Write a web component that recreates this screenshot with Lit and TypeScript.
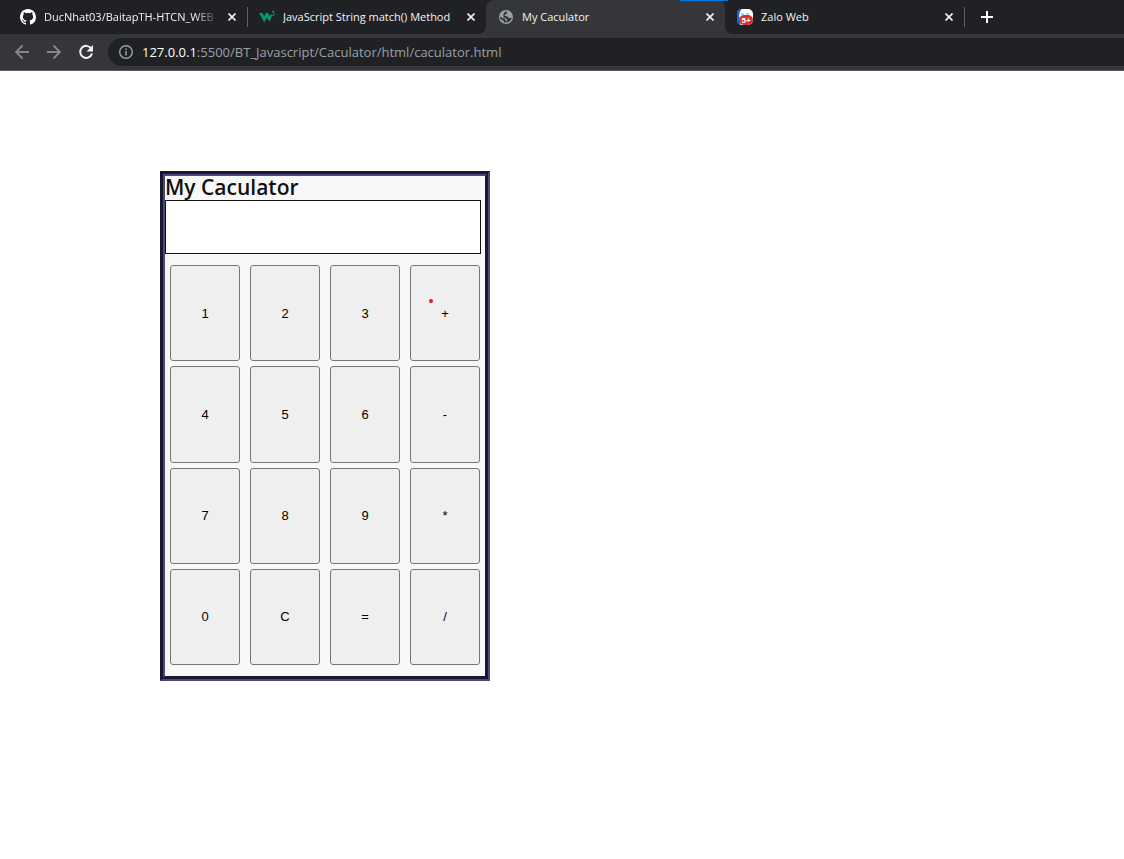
import { LitElement, html, css, svg, nothing } from "lit";
import { customElement, property, state } from "lit/decorators.js";
import { classMap } from "lit/directives/class-map.js";

const githubIcon = svg`<svg width="16" height="16" viewBox="0 0 16 16" aria-hidden="true"><path fill="#fff" d="M8 0C3.58 0 0 3.58 0 8c0 3.54 2.29 6.53 5.47 7.59.4.07.55-.17.55-.38 0-.19-.01-.82-.01-1.49-2.01.37-2.53-.49-2.69-.94-.09-.23-.48-.94-.82-1.13-.28-.15-.68-.52-.01-.53.63-.01 1.08.58 1.23.82.72 1.21 1.87.87 2.33.66.07-.52.28-.87.51-1.07-1.78-.2-3.64-.89-3.64-3.95 0-.87.31-1.59.82-2.15-.08-.2-.36-1.02.08-2.12 0 0 .67-.21 2.2.82a7.6 7.6 0 0 1 4 0c1.53-1.04 2.2-.82 2.2-.82.44 1.1.16 1.92.08 2.12.51.56.82 1.27.82 2.15 0 3.07-1.87 3.75-3.65 3.95.29.25.54.73.54 1.48 0 1.07-.01 1.93-.01 2.2 0 .21.15.46.55.38A8.01 8.01 0 0 0 16 8c0-4.42-3.58-8-8-8z"/></svg>`;

const schoolsIcon = svg`<svg width="16" height="16" viewBox="0 0 16 16" aria-hidden="true"><path fill="#059862" d="M0 4h3.600l1.600 3.300L6.800 4h2.200l1.800 3 .8-1.500h2L10.400 12.800 8 8.600l-2.800 4.600z"/><path fill="none" stroke="#059862" stroke-width="1" d="M13 2.500h2.200L14 4c1.900 0 1.900 2.600 0 2.600-.6 0-1-.2-1.200-.6"/></svg>`;

const globeIcon = svg`<svg width="16" height="16" viewBox="0 0 16 16" aria-hidden="true"><circle cx="8" cy="8" r="7" fill="#9aa0a6"/><path fill="#35363a" d="M8.500 2.300C8.300 3.300 9.200 3.500 9.200 4.300 9 5.400 6.600 5 6.600 6.300c0 .8.900.9 2 .9 1.800 0 1.500 1.800 2.700 1.800.9 0 1.700-.5 2.400-.3-.4 2.600-2.400 4.500-4.900 4.900.2-1.100-.2-1.700-1-2-.9-.3-.6-1.600-1.600-2C5.200 9.100 3.500 8.700 2.300 7.600 2.400 8.300 2 9 2.600 10.200l3 1.600c.3.600.1 1.300.4 1.800l1.800.1c-.1-1.500 1.400-1.700 1.500-3C9.300 9.500 5.300 9.300 5.300 7.200 5.200 5.500 5.500 3.200 8.500 2.300z"/></svg>`;

const zaloIcon = svg`<svg width="16" height="16" viewBox="0 0 16 16" aria-hidden="true"><rect width="16" height="16" rx="5" fill="#fff"/><path fill="#0b62dc" d="M4.500 0H4a4 4 0 0 0-4 4v8a4 4 0 0 0 3 3.800V11C1.400 7.500 2 3 4.500 0z"/><path stroke="#5c9aef" d="M4 5h3m2 0h3"/><rect x="2" y="6" width="14" height="10" rx="5" fill="#d93030"/><text x="9" y="14" text-anchor="middle" fill="#fff" font-family="Liberation Sans, sans-serif" font-weight="700" font-size="8">5+</text></svg>`;

const closeIcon = svg`<svg width="8" height="8" viewBox="0 0 8 8" aria-hidden="true"><path d="M.5.5l7 7m0-7-7 7" stroke="#f1f3f4" stroke-width="1.600"/></svg>`;

const backIcon = svg`<svg width="16" height="16" viewBox="0 0 16 16" aria-hidden="true"><path d="M15 8H2m6.500-6.500L2 8l6.500 6.500" fill="none" stroke="#85878a" stroke-width="1.800"/></svg>`;
const forwardIcon = svg`<svg width="16" height="16" viewBox="0 0 16 16" aria-hidden="true"><path d="M1 8h13M7.500 1.500 14 8l-6.500 6.500" fill="none" stroke="#85878a" stroke-width="1.800"/></svg>`;
const reloadIcon = svg`<svg width="16" height="16" viewBox="0 0 16 16" aria-hidden="true"><path d="M13.200 4.500A6 6 0 1 0 14 9.500" fill="none" stroke="#f1f3f4" stroke-width="2"/><path d="M15 1v6.500H8.500z" fill="#f1f3f4"/></svg>`;
const infoIcon = svg`<svg width="14" height="14" viewBox="0 0 14 14" aria-hidden="true"><circle cx="7" cy="7" r="6.300" fill="none" stroke="#9aa0a6" stroke-width="1.400"/><path d="M7 6v4.500M7 3.500V5" stroke="#9aa0a6" stroke-width="1.500"/></svg>`;
const plusIcon = svg`<svg width="12" height="12" viewBox="0 0 12 12" aria-hidden="true"><path d="M6 0v12M0 6h12" stroke="#fff" stroke-width="2"/></svg>`;

const tabs = [
  { title: "DucNhat03/BaitapTH-HTCN_WEB", icon: githubIcon },
  { title: "JavaScript String match() Method", icon: schoolsIcon },
  { title: "My Caculator", icon: globeIcon },
  { title: "Zalo Web", icon: zaloIcon },
];

@customElement("browser-bar")
export class BrowserBar extends LitElement {
  @property({ type: Number }) active = 2;

  static styles = css`
    :host {
      display: block;
      position: relative;
      font-family: "Open Sans", "Noto Sans", sans-serif;
      background: #35363a;
      border-bottom: 1px solid #5d5b61;
    }
    * {
      box-sizing: border-box;
    }
    button {
      display: grid;
      place-items: center;
      flex: none;
      padding: 0;
      border: 0;
      background: none;
    }
    svg {
      display: block;
      flex: none;
    }
    .accent {
      position: absolute;
      top: 0;
      left: 680px;
      width: 48px;
      height: 1px;
      background: #0078d7;
    }
    .strip {
      display: flex;
      gap: 1px;
      height: 34px;
      padding-left: 8px;
      background: #202124;
    }
    .tabs {
      display: flex;
      flex: 0 1 956px;
      min-width: 0;
    }
    .tab {
      position: relative;
      display: flex;
      align-items: center;
      flex: 1;
      min-width: 0;
      gap: 8px;
      padding: 0 7px 0 12px;
      color: #f1f3f4;
      font-size: 11px;
      font-weight: 500;
      line-height: 16px;
    }
    .tab.active {
      background: #35363a;
      border-radius: 8px 8px 0 0;
    }
    .tab.active::before,
    .tab.active::after {
      content: "";
      position: absolute;
      bottom: 0;
      width: 8px;
      height: 8px;
    }
    .tab.active::before {
      right: 100%;
      background: radial-gradient(circle at 0 0, #202124 8px, #35363a 8px);
    }
    .tab.active::after {
      left: 100%;
      background: radial-gradient(circle at 100% 0, #202124 8px, #35363a 8px);
    }
    .tab.divided::after {
      content: "";
      position: absolute;
      top: 7px;
      right: -1px;
      width: 1px;
      height: 20px;
      background: #5f6165;
    }
    .title {
      flex: 1;
      min-width: 0;
      margin-right: -4px;
      overflow: hidden;
      white-space: nowrap;
    }
    .title.fade {
      mask-image: linear-gradient(to right, #000 85%, transparent);
    }
    .close {
      width: 16px;
      height: 16px;
    }
    .add {
      width: 44px;
      height: 34px;
    }
    .toolbar {
      display: flex;
      align-items: center;
      height: 36px;
      padding-left: 6px;
    }
    .nav {
      width: 32px;
      height: 28px;
    }
    .address {
      display: flex;
      align-items: center;
      flex: 1;
      gap: 9px;
      height: 28px;
      margin-left: 6px;
      padding-left: 11px;
      border-radius: 14px 0 0 14px;
      background: #202124;
      color: #9aa0a6;
      font-size: 13px;
      line-height: 20px;
    }
    .host {
      color: #fff;
    }
  `;

  render() {
    return html`
      <div class="strip">
        <div class="tabs">
          ${tabs.map(
            (tab, i) => html`
              <div
                class=${classMap({
                  tab: true,
                  active: i === this.active,
                  divided: i !== this.active && i + 1 !== this.active,
                })}
              >
                ${tab.icon}
                <span class=${classMap({ title: true, fade: i === 0 })}>${tab.title}</span>
                <button class="close" aria-label="Close tab">${closeIcon}</button>
              </div>
            `
          )}
        </div>
        <button class="add" aria-label="New tab">${plusIcon}</button>
      </div>
      <div class="toolbar">
        <button class="nav" aria-label="Back">${backIcon}</button>
        <button class="nav" aria-label="Forward">${forwardIcon}</button>
        <button class="nav" aria-label="Reload">${reloadIcon}</button>
        <div class="address">
          ${infoIcon}
          <span><span class="host">127.0.0.1</span>:5500/BT_Javascript/Caculator/html/caculator.html</span>
        </div>
      </div>
      <div class="accent"></div>
    `;
  }
}

const keys = ["1", "2", "3", "+", "4", "5", "6", "-", "7", "8", "9", "*", "0", "C", "=", "/"];

@customElement("calculator-pad")
export class CalculatorPad extends LitElement {
  @state() private entry = "";

  static styles = css`
    :host {
      display: block;
      box-sizing: border-box;
      width: 330px;
      padding-bottom: 11px;
      border: 5px groove #4a4880;
      background: #f8f8f8;
    }
    * {
      box-sizing: border-box;
    }
    .heading {
      display: block;
      padding-bottom: 2px;
      color: #111;
      font: 600 21px/22px "Open Sans", sans-serif;
    }
    .display {
      display: block;
      width: 316px;
      height: 54px;
      padding: 0 8px;
      border: 1px solid #111;
      border-radius: 0;
      background: #fff;
      font: 20px "Liberation Sans", sans-serif;
      outline: none;
    }
    .keys {
      display: grid;
      grid-template-columns: repeat(4, 1fr);
      grid-template-rows: repeat(4, 1fr);
      gap: 5px 10px;
      height: 400px;
      margin: 11px 5px 0;
    }
    .key {
      position: relative;
      padding: 0;
      border: 1px solid #767676;
      border-radius: 3px;
      background: #efefef;
      color: #000;
      font: 13px "Liberation Sans", sans-serif;
    }
    .dot {
      position: absolute;
      top: 33px;
      left: 18px;
      width: 4px;
      height: 4px;
      border-radius: 50%;
      background: #e8191c;
    }
  `;

  private press(key: string) {
    if (key === "C") {
      this.entry = "";
    } else if (key === "=") {
      this.entry = this.evaluate(this.entry);
    } else {
      this.entry += key;
    }
  }

  private evaluate(text: string): string {
    const parts = text.match(/\d+(?:\.\d+)?|[-+*/]/g) ?? [];
    const terms: number[] = [];
    let op = "+";
    for (const part of parts) {
      if (/^[-+*/]$/.test(part)) {
        op = part;
        continue;
      }
      const n = Number(part);
      if (op === "+") terms.push(n);
      else if (op === "-") terms.push(-n);
      else if (op === "*") terms.push((terms.pop() ?? 0) * n);
      else terms.push((terms.pop() ?? 0) / n);
    }
    return terms.length ? String(terms.reduce((a, b) => a + b, 0)) : "";
  }

  render() {
    return html`
      <label class="heading" for="display">My Caculator</label>
      <input class="display" id="display" type="text" readonly .value=${this.entry} />
      <div class="keys">
        ${keys.map(
          (key) => html`<button class="key" @click=${() => this.press(key)}>
            ${key}${key === "+" ? html`<span class="dot"></span>` : nothing}
          </button>`
        )}
      </div>
    `;
  }
}

@customElement("app-root")
export class AppRoot extends LitElement {
  static styles = css`
    :host {
      display: block;
      min-height: 100vh;
      background: #fff;
    }
    .page {
      padding: 100px 160px;
    }
  `;

  render() {
    return html`
      <browser-bar></browser-bar>
      <main class="page"><calculator-pad></calculator-pad></main>
    `;
  }
}
